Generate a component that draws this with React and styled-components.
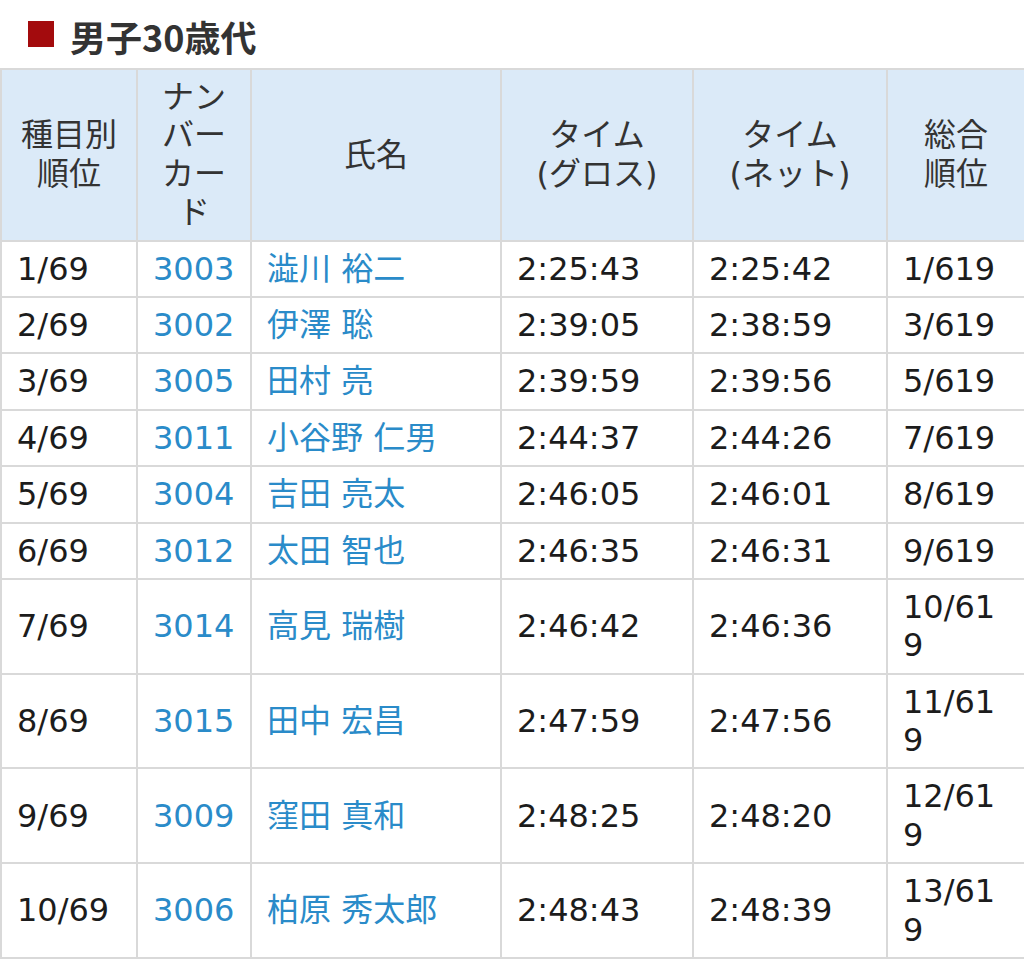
import React from 'react';
import styled, { createGlobalStyle } from 'styled-components';

const GlobalStyle = createGlobalStyle`
  html, body {
    margin: 0;
    padding: 0;
    background: #fff;
  }
  body {
    font-family: "DejaVu Sans", "Noto Sans CJK JP", sans-serif;
    color: #1c1c1c;
  }
`;

const Page = styled.div`
  width: 1024px;
`;

const Heading = styled.h2`
  display: flex;
  align-items: center;
  gap: 16px;
  height: 68px;
  margin: 0;
  padding: 4px 0 0 28px;
  box-sizing: border-box;
  font-family: "Noto Sans CJK JP", sans-serif;
  font-size: 36px;
  font-weight: 700;
  color: #333;
  line-height: 1;
`;

const Square = styled.span`
  width: 26px;
  height: 26px;
  margin-top: -4px;
  background: #a30b0d;
  flex-shrink: 0;
`;

const Table = styled.table`
  width: 1024px;
  table-layout: fixed;
  border-collapse: collapse;
  font-size: 32px;
  line-height: 1.2;
`;

const HeadCell = styled.th`
  background: #dbeaf8;
  border: 2px solid #d9d9d9;
  padding: 8px 15px;
  font-weight: 400;
  text-align: center;
  vertical-align: middle;
  color: #333;
`;

const Cell = styled.td`
  border: 2px solid #d9d9d9;
  padding: 8px 15px;
  text-align: left;
  vertical-align: middle;
  overflow-wrap: break-word;
  color: ${p => (p.$link ? '#2a8bc9' : '#1c1c1c')};
`;

const columns = [136, 114, 250, 192, 194, 138];

const headers = [
  ['種目別', '順位'],
  ['ナン', 'バー', 'カー', 'ド'],
  ['氏名'],
  ['タイム', '(グロス)'],
  ['タイム', '(ネット)'],
  ['総合', '順位'],
];

const rows = [
  ['1/69', '3003', '澁川 裕二', '2:25:43', '2:25:42', '1/619'],
  ['2/69', '3002', '伊澤 聡', '2:39:05', '2:38:59', '3/619'],
  ['3/69', '3005', '田村 亮', '2:39:59', '2:39:56', '5/619'],
  ['4/69', '3011', '小谷野 仁男', '2:44:37', '2:44:26', '7/619'],
  ['5/69', '3004', '吉田 亮太', '2:46:05', '2:46:01', '8/619'],
  ['6/69', '3012', '太田 智也', '2:46:35', '2:46:31', '9/619'],
  ['7/69', '3014', '高見 瑞樹', '2:46:42', '2:46:36', '10/619'],
  ['8/69', '3015', '田中 宏昌', '2:47:59', '2:47:56', '11/619'],
  ['9/69', '3009', '窪田 真和', '2:48:25', '2:48:20', '12/619'],
  ['10/69', '3006', '柏原 秀太郎', '2:48:43', '2:48:39', '13/619'],
];

const App = () => {
  return (
    <Page>
      <GlobalStyle />
      <Heading>
        <Square />
        男子30歳代
      </Heading>
      <Table>
        <colgroup>
          {columns.map((w, i) => (
            <col key={i} style={{ width: w }} />
          ))}
        </colgroup>
        <thead>
          <tr>
            {headers.map((lines, i) => (
              <HeadCell key={i}>
                {lines.map((l, j) => (
                  <React.Fragment key={j}>
                    {j > 0 && <br />}
                    {l}
                  </React.Fragment>
                ))}
              </HeadCell>
            ))}
          </tr>
        </thead>
        <tbody>
          {rows.map((r, i) => (
            <tr key={i}>
              {r.map((v, j) => (
                <Cell key={j} $link={j === 1 || j === 2}>
                  {v}
                </Cell>
              ))}
            </tr>
          ))}
        </tbody>
      </Table>
    </Page>
  );
};

export default App;
